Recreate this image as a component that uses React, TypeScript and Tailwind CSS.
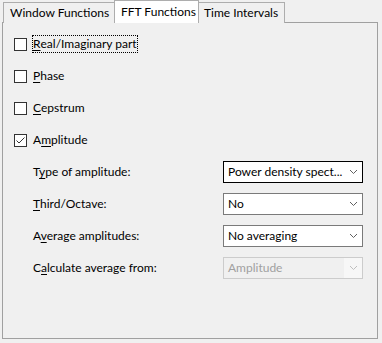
import React from "react";

const font = { fontFamily: 'Lato, "Noto Sans", sans-serif' };

function U({ children }: { children: React.ReactNode }) {
  return <span className="underline underline-offset-[2px] decoration-[1px]">{children}</span>;
}

function Check({ checked }: { checked?: boolean }) {
  return (
    <div className="w-[13px] h-[13px] border border-[#333333] bg-white shrink-0 flex items-center justify-center">
      {checked && (
        <svg width="11" height="11" viewBox="0 0 11 11">
          <path d="M1.5 5.5 L4 8 L9.5 2.5" fill="none" stroke="#333333" strokeWidth="1" />
        </svg>
      )}
    </div>
  );
}

function Chevron({ color }: { color: string }) {
  return (
    <svg width="9" height="6" viewBox="0 0 9 6">
      <path d="M1 1 L4.5 4.5 L8 1" fill="none" stroke={color} strokeWidth="1" />
    </svg>
  );
}

function Combo({ text, focus, disabled }: { text: string; focus?: boolean; disabled?: boolean }) {
  const border = disabled ? "border-[#cccccc] bg-[#f0f0f0]" : focus ? "border-[#000000] bg-white" : "border-[#7a7a7a] bg-white";
  return (
    <div className={`w-[140px] h-[22px] border ${border} flex items-center`}>
      <span className={`flex-1 pl-[4px] text-[12px] leading-[18px] whitespace-nowrap ${disabled ? "text-[#a0a0a0]" : "text-black"}`}>{text}</span>
      <div className={`w-[18px] h-full flex items-center justify-center ${disabled ? "bg-[#f7f7f7]" : ""}`}>
        <Chevron color={disabled ? "#bfbfbf" : "#606060"} />
      </div>
    </div>
  );
}

function CheckRow({ label, checked, focus }: { label: React.ReactNode; checked?: boolean; focus?: boolean }) {
  return (
    <div className="h-[32px] flex items-center pl-[11px]">
      <Check checked={checked} />
      <div className={`ml-[5px] h-[18px] px-[1px] flex items-center text-[12px] text-black whitespace-nowrap ${focus ? "outline outline-1 outline-dotted outline-black -outline-offset-1" : ""}`}>
        {label}
      </div>
    </div>
  );
}

function ComboRow({ label, combo }: { label: React.ReactNode; combo: React.ReactNode }) {
  return (
    <div className="h-[32px] flex items-center pl-[30px]">
      <div className="w-[190px] text-[12px] text-black whitespace-nowrap">{label}</div>
      {combo}
    </div>
  );
}

export default function App() {
  return (
    <div className="w-[382px] h-[343px] bg-[#f0f0f0] overflow-hidden" style={font}>
      <div className="px-[2px] pt-0">
        <div className="flex items-end h-[23px] relative z-10">
          <div className="h-[21px] w-[112px] border border-[#adadad] border-b-0 bg-[#f0f0f0] ml-[1px] flex items-center pl-[6px] text-[12px] text-black whitespace-nowrap">
            Window Functions
          </div>
          <div className="h-[23px] w-[85px] -ml-[1px] border border-[#adadad] border-b-0 bg-white flex items-center pl-[6px] text-[12px] text-black whitespace-nowrap">
            FFT Functions
          </div>
          <div className="h-[21px] w-[87px] -ml-[1px] border border-[#adadad] border-b-0 bg-[#f0f0f0] flex items-center pl-[5px] text-[12px] text-black whitespace-nowrap">
            Time Intervals
          </div>
        </div>
        <div className="-mt-[1px] w-[376px] h-[317px] border border-[#a0a0a0] bg-[#f0f0f0] pt-[5px]">
          <CheckRow focus label={<><U>R</U>eal/Imaginary part</>} />
          <CheckRow label={<><U>P</U>hase</>} />
          <CheckRow label={<><U>C</U>epstrum</>} />
          <CheckRow checked label={<>A<U>m</U>plitude</>} />
          <ComboRow label={<>T<U>y</U>pe of amplitude:</>} combo={<Combo focus text="Power density spect..." />} />
          <ComboRow label={<><U>T</U>hird/Octave:</>} combo={<Combo text="No" />} />
          <ComboRow label={<>A<U>v</U>erage amplitudes:</>} combo={<Combo text="No averaging" />} />
          <ComboRow label={<>C<U>a</U>lculate average from:</>} combo={<Combo disabled text="Amplitude" />} />
        </div>
      </div>
    </div>
  );
}
